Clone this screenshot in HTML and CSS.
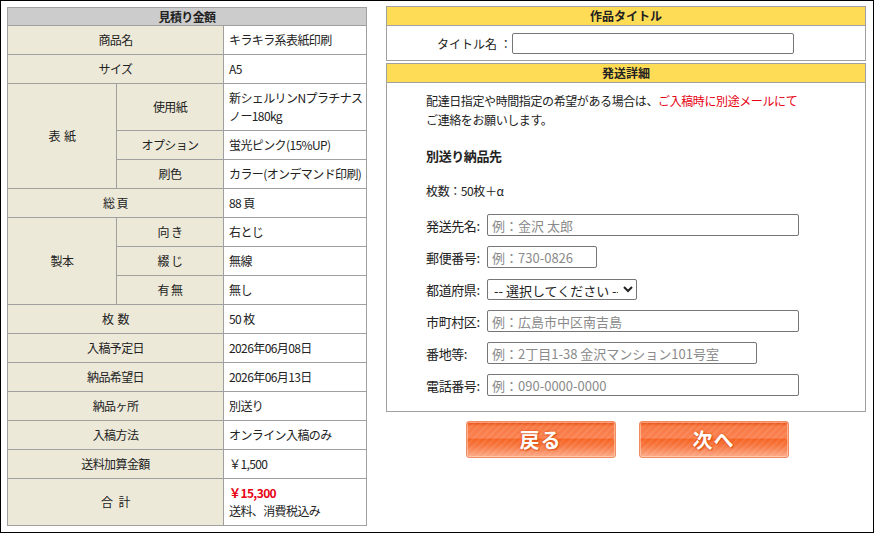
FILE: index.html
```html
<!DOCTYPE html>
<html lang="ja">
<head>
    <meta charset="UTF-8">
    <title>見積り金額</title>
    <link rel="stylesheet" href="styles.css">
</head>
<body>
<div class="frame">
    <table class="estimate">
        <colgroup>
            <col class="c1"><col class="c2"><col class="c3">
        </colgroup>
        <tr><th colspan="3" class="head">見積り金額</th></tr>
        <tr><th colspan="2">商品名</th><td>キラキラ系表紙印刷</td></tr>
        <tr><th colspan="2">サイズ</th><td>A5</td></tr>
        <tr><th rowspan="3">表&nbsp;&nbsp;紙</th><th class="tall">使用紙</th><td>新シェルリンNプラチナス<br>ノー180kg</td></tr>
        <tr><th>オプション</th><td>蛍光ピンク(15%UP)</td></tr>
        <tr><th>刷色</th><td>カラー(オンデマンド印刷)</td></tr>
        <tr><th colspan="2">総&nbsp;頁</th><td>88 頁</td></tr>
        <tr><th rowspan="3">製本</th><th>向&nbsp;き</th><td>右とじ</td></tr>
        <tr><th>綴&nbsp;じ</th><td>無線</td></tr>
        <tr><th>有&nbsp;無</th><td>無し</td></tr>
        <tr><th colspan="2">枚&nbsp;&nbsp;数</th><td>50 枚</td></tr>
        <tr><th colspan="2">入稿予定日</th><td>2026年06月08日</td></tr>
        <tr><th colspan="2">納品希望日</th><td>2026年06月13日</td></tr>
        <tr><th colspan="2">納品ヶ所</th><td>別送り</td></tr>
        <tr><th colspan="2">入稿方法</th><td>オンライン入稿のみ</td></tr>
        <tr><th colspan="2">送料加算金額</th><td>￥1,500</td></tr>
        <tr><th colspan="2">合&nbsp;&nbsp;&nbsp;計</th><td><span class="total">￥15,300</span><br>送料、消費税込み</td></tr>
    </table>

    <div class="side">
        <div class="box">
            <div class="box-head">作品タイトル</div>
            <div class="title-row">
                <label>タイトル名 ：</label>
                <input type="text" class="title-input">
            </div>
        </div>

        <div class="box">
            <div class="box-head">発送詳細</div>
            <div class="detail">
                <p class="notice">配達日指定や時間指定の希望がある場合は、<span class="red">ご入稿時に別途メールにて</span><br>ご連絡をお願いします。</p>
                <p class="sub">別送り納品先</p>
                <p class="count">枚数：50枚＋α</p>
                <div class="row"><label>発送先名:</label><input type="text" class="w-long" placeholder="例：金沢 太郎"></div>
                <div class="row"><label>郵便番号:</label><input type="text" class="w-zip" placeholder="例：730-0826"></div>
                <div class="row"><label>都道府県:</label>
                    <select class="w-pref"><option>-- 選択してください --</option></select>
                </div>
                <div class="row"><label>市町村区:</label><input type="text" class="w-long" placeholder="例：広島市中区南吉島"></div>
                <div class="row"><label>番地等:</label><input type="text" class="w-mid" placeholder="例：2丁目1-38 金沢マンション101号室"></div>
                <div class="row"><label>電話番号:</label><input type="text" class="w-long" placeholder="例：090-0000-0000"></div>
            </div>
        </div>

        <div class="buttons">
            <a href="#" class="btn">戻る</a>
            <a href="#" class="btn">次へ</a>
        </div>
    </div>
</div>
</body>
</html>
```

FILE: styles.css
```css
html, body {
    margin: 0;
    padding: 0;
}
body {
    font-family: "Noto Sans CJK JP", "DejaVu Sans", sans-serif;
    font-size: 12px;
    color: #222;
    background-color: #fff;
}
.frame {
    width: 874px;
    height: 533px;
    box-sizing: border-box;
    border: 1px solid #000;
    padding: 5px 0 0 6px;
    display: flex;
    align-items: flex-start;
}
.estimate {
    margin-top: 1px;
    width: 359px;
    table-layout: fixed;
    border-collapse: collapse;
    letter-spacing: -0.6px;
}
.c1 { width: 109px; }
.c2 { width: 107px; }
.c3 { width: 143px; }
.estimate th,
.estimate td {
    border: 1px solid #a0a0a0;
    padding: 5px 5px;
    line-height: 18px;
    font-weight: normal;
    white-space: nowrap;
}
.estimate th {
    background-color: #ece9d8;
    text-align: center;
}
.estimate td {
    background-color: #fff;
    text-align: left;
}
.estimate th.head {
    background-color: #cccccc;
    font-weight: bold;
    padding: 0;
    line-height: 17px;
}
.estimate td .total {
    color: #e60012;
    font-weight: bold;
}
.side {
    margin-left: 19px;
    width: 480px;
}
.box {
    border: 1px solid #a0a0a0;
    margin-bottom: 2px;
}
.box-head {
    background-color: #fedc56;
    border-bottom: 1px solid #a0a0a0;
    text-align: center;
    font-weight: bold;
    line-height: 18px;
}
.title-row {
    height: 34px;
    display: flex;
    align-items: center;
    padding-left: 50px;
}
.title-row label {
    width: 75px;
}
.title-input {
    width: 282px;
    height: 21px;
    box-sizing: border-box;
    border: 1px solid #767676;
    border-radius: 2px;
}
.detail {
    padding: 8px 20px 15px 39px;
    letter-spacing: -0.4px;
}
.detail p {
    margin: 0;
    line-height: 19px;
}
.red {
    color: #e60012;
}
.detail .sub {
    margin-top: 17px;
    font-weight: bold;
    font-size: 13px;
}
.detail .count {
    margin-top: 16px;
}
.row {
    display: flex;
    align-items: center;
    height: 22px;
    margin-top: 10px;
}
.row:first-of-type {
    margin-top: 14px;
}
.row label {
    width: 61px;
    flex-shrink: 0;
    font-size: 13px;
}
.row input,
.row select {
    height: 22px;
    box-sizing: border-box;
    border: 1px solid #767676;
    border-radius: 2px;
    font-family: "Noto Sans CJK JP", sans-serif;
    font-size: 13px;
    padding: 0 4px;
    letter-spacing: 0;
}
.row input::placeholder {
    color: #8a8a8a;
}
.row select {
    height: 21px;
    color: #222;
    background-color: #fff;
    padding: 0 2px;
}
.w-long { width: 312px; }
.w-zip { width: 110px; }
.w-pref { width: 150px; }
.w-mid { width: 270px; }
.buttons {
    display: flex;
    justify-content: center;
    gap: 23px;
    margin-top: 9px;
    padding-left: 2px;
}
.btn {
    display: block;
    width: 150px;
    height: 37px;
    box-sizing: border-box;
    border: 1px solid #f08b62;
    border-radius: 3px;
    background:
        repeating-linear-gradient(135deg, rgba(255,255,255,0.08) 0 2px, rgba(255,255,255,0) 2px 5px),
        linear-gradient(#e94a0c 0%, #f77a45 12%, #fb8150 45%, #f66424 50%, #f77a45 70%, #fcab8a 100%);
    box-shadow: inset 0 0 0 1px rgba(255,220,200,0.55);
    color: #fff;
    text-decoration: none;
    text-align: center;
    font-size: 20px;
    font-weight: bold;
    line-height: 35px;
    letter-spacing: 1px;
    text-shadow: 0 0 2px #e25a1c, 0 0 2px #e25a1c, 1px 1px 1px #d9551c;
}
```
